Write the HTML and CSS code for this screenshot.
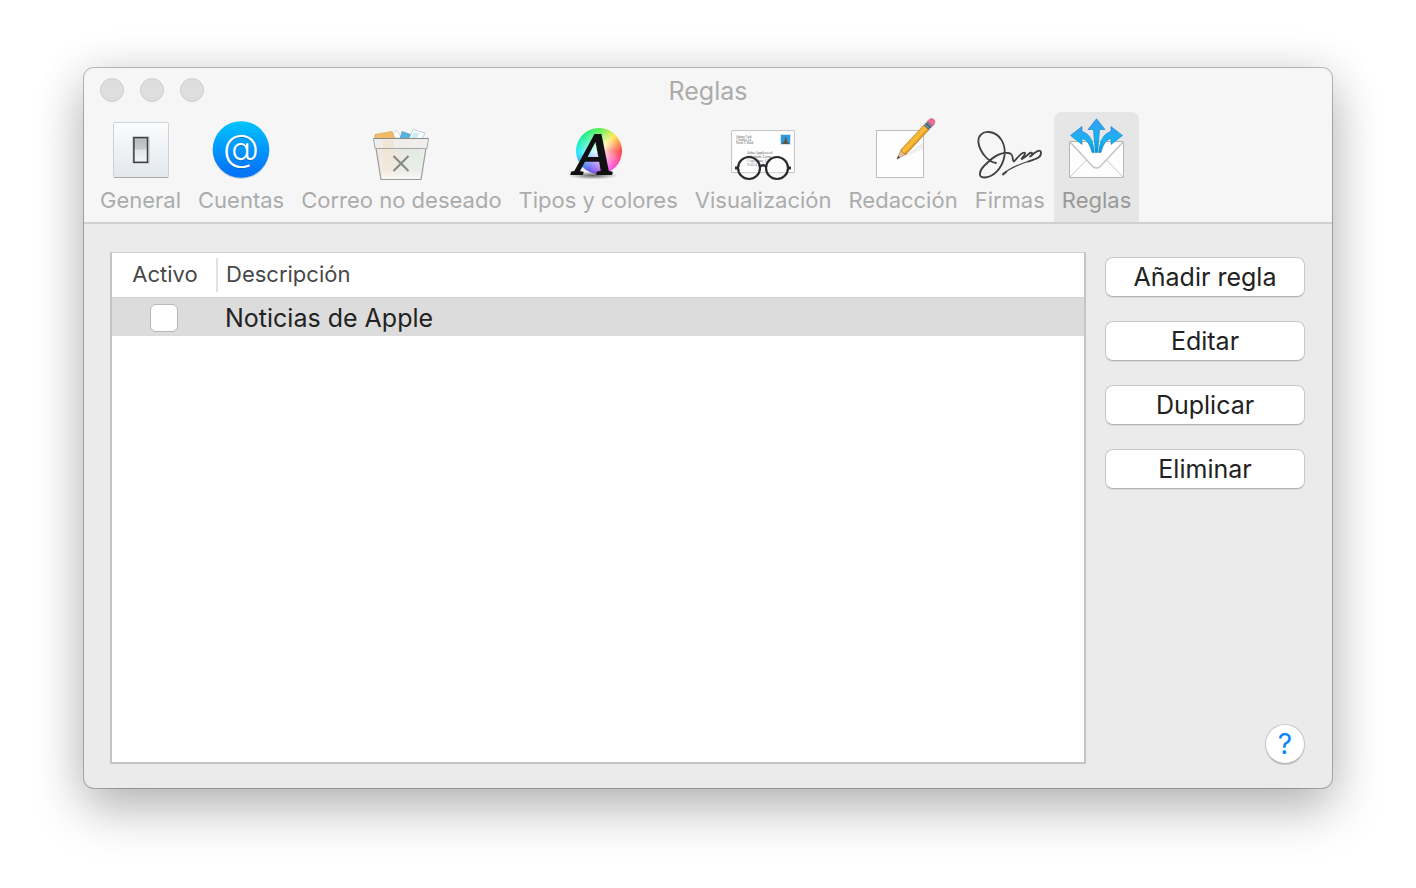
FILE: index.html
```html
<!DOCTYPE html>
<html lang="es">
<head>
<meta charset="utf-8">
<meta name="viewport" content="width=device-width, initial-scale=1">
<title>Reglas</title>
<link rel="stylesheet" href="styles.css">
</head>
<body>
<main class="window">
  <header class="chrome">
    <div class="titlebar">
      <div class="lights">
        <button class="light" type="button" aria-label="Cerrar"></button>
        <button class="light" type="button" aria-label="Minimizar"></button>
        <button class="light" type="button" aria-label="Ampliar"></button>
      </div>
      <h1 class="title">Reglas</h1>
    </div>
    <nav class="toolbar">
      <button class="tab" type="button">
        <svg class="icon" viewBox="0 0 64 64" aria-hidden="true">
          <defs>
            <linearGradient id="plate" x1="0" y1="0" x2="0" y2="1"><stop offset="0" stop-color="#fbfcfd"/><stop offset="1" stop-color="#e3e8ed"/></linearGradient>
            <linearGradient id="switch" x1="0" y1="0" x2="0" y2="1"><stop offset="0" stop-color="#d4d6d8"/><stop offset=".1" stop-color="#b9bcbe"/><stop offset=".45" stop-color="#c8cacc"/><stop offset=".5" stop-color="#e2e5e8"/><stop offset="1" stop-color="#f2f4f6"/></linearGradient>
          </defs>
          <rect x="4.500" y="4.500" width="55" height="55" rx="1" fill="url(#plate)" stroke="#cfd2d5"/>
          <path d="M5 59.500H59" stroke="#a9abad"/>
          <rect x="23" y="18" width="18" height="28" rx="1" fill="#d3d7da"/>
          <rect x="24.900" y="19.700" width="13.600" height="24.600" fill="url(#switch)" stroke="#3b4044" stroke-width="1.500"/>
        </svg>
        <span class="label">General</span>
      </button>
      <button class="tab" type="button">
        <svg class="icon" viewBox="0 0 64 64" aria-hidden="true">
          <defs><linearGradient id="blue" x1="0" y1="0" x2="0" y2="1"><stop offset="0" stop-color="#00c4fb"/><stop offset=".85" stop-color="#0478fb"/><stop offset="1" stop-color="#0374f5"/></linearGradient></defs>
          <circle cx="32" cy="32.600" r="28.400" fill="#9fb6cc" opacity=".6"/>
          <circle cx="32" cy="31.500" r="28.300" fill="url(#blue)"/>
          <text class="at-shade" x="32" y="44" text-anchor="middle">@</text>
          <text class="at" x="32" y="43" text-anchor="middle">@</text>
        </svg>
        <span class="label">Cuentas</span>
      </button>
      <button class="tab" type="button">
        <svg class="icon" viewBox="0 0 64 64" aria-hidden="true">
          <defs>
            <linearGradient id="bin" x1="0" y1="0" x2="1" y2="0"><stop offset="0" stop-color="#eceae6"/><stop offset=".25" stop-color="#efe3d2"/><stop offset=".55" stop-color="#e6e7e5"/><stop offset=".85" stop-color="#e3eae2"/><stop offset="1" stop-color="#eeeeee"/></linearGradient>
            <linearGradient id="shine" x1="0" y1="0" x2="0" y2="1"><stop offset="0" stop-color="#fff" stop-opacity="0"/><stop offset=".7" stop-color="#fff" stop-opacity=".2"/><stop offset="1" stop-color="#fff" stop-opacity=".75"/></linearGradient>
          </defs>
          <path d="M22 20 27 12 33 20Z" fill="#fff" stroke="#c5c7c8" stroke-width=".7"/>
          <path d="M6 16.500 23 13.500 26 21H6Z" fill="#f1bb68" stroke="#d9a24f" stroke-width=".7"/>
          <path d="M33 13.500 43 17 39 21H31Z" fill="#55b2dd" stroke="#3f97c4" stroke-width=".6"/>
          <path d="M44 11.500 56 15 53 21H40Z" fill="#fbfdfe" stroke="#a9bfc5" stroke-width=".7"/>
          <path d="M45 14 50 15.500 48 20H42Z" fill="#c8edf3"/>
          <path d="M7 30H57L52 61.500H12Z" fill="url(#bin)"/>
          <path d="M7 30H57L52 61.500H12Z" fill="url(#shine)" stroke="#999b9c" stroke-width="1.200"/>
          <path d="M4.500 20.500H59.500L58 30.500H6Z" fill="#eeedeb" fill-opacity=".94" stroke="#a8a9aa"/>
          <path d="M4.500 20.500H59.500" stroke="#868889"/>
          <path d="M14 22H24L25 30H14Z" fill="#efd9b5" opacity=".4"/>
          <path d="M24.500 38 39.500 53M39.500 38 24.500 53" stroke="#858782" stroke-width="2.100"/>
        </svg>
        <span class="label">Correo no deseado</span>
      </button>
      <button class="tab" type="button">
        <span class="icon fonts">
          <span class="wheel"></span>
          <svg class="fonts-letter" viewBox="0 0 64 64" aria-hidden="true">
            <defs><radialGradient id="soft"><stop offset="0" stop-opacity=".6"/><stop offset="1" stop-opacity="0"/></radialGradient></defs>
            <ellipse cx="27" cy="57.500" rx="25" ry="4" fill="url(#soft)"/>
            <text class="letter" x="27" y="56" text-anchor="middle">A</text>
          </svg>
        </span>
        <span class="label">Tipos y colores</span>
      </button>
      <button class="tab" type="button">
        <svg class="icon" viewBox="0 0 64 64" aria-hidden="true">
          <rect x=".600" y="12.600" width="62.800" height="42" rx=".5" fill="#fefefe" stroke="#c2c3c3"/>
          <g class="address">
            <text x="5" y="19.500">Johnny Cash</text><text x="5" y="22.500">1 Infinite Lp</text><text x="5" y="25.500">North T. Road</text>
          </g>
          <g class="recipient">
            <text x="16" y="36">John Appleseed</text><text x="16" y="40">1 Infinite Loop</text><text x="16" y="44">Cupertino, CA</text><text x="16" y="48">95014</text>
          </g>
          <rect x="49" y="16" width="11" height="11" fill="#cfe3f2"/>
          <rect x="50" y="17" width="9" height="9" fill="#2d9be0"/>
          <path d="M54 18.500Q56 20 56 23L58 26H51L54 22Z" fill="#65513d"/>
          <g fill="none" stroke="#282a2c" stroke-width="2.200">
            <circle cx="18" cy="50" r="11" fill="#fff" fill-opacity=".25"/>
            <circle cx="46" cy="50" r="11" fill="#fff" fill-opacity=".25"/>
            <path d="M28.500 49Q32 45.500 35.500 49" stroke-width="2.500"/>
            <path d="M4 50H7.500M56.500 50H60" stroke-width="2.800"/>
          </g>
        </svg>
        <span class="label">Visualización</span>
      </button>
      <button class="tab" type="button">
        <svg class="icon" viewBox="0 0 64 64" aria-hidden="true">
          <defs><linearGradient id="wood" x1="0" y1="0" x2="0" y2="1"><stop offset="0" stop-color="#f6ad25"/><stop offset=".5" stop-color="#ffc643"/><stop offset="1" stop-color="#dc8e14"/></linearGradient></defs>
          <rect x="5.500" y="12.500" width="47" height="47" fill="#fefefe" stroke="#bcbdbd"/>
          <path d="M29 41 52 24V31L34 39Z" fill="#000" opacity=".06"/>
          <g transform="translate(26 41) rotate(-47)">
            <path d="M0 0 10-3.400V3.400Z" fill="#e9bd91" stroke="#93704f" stroke-width=".5"/>
            <path d="M0 0 3-1.200V1.200Z" fill="#30302f"/>
            <path d="M10-3.400H43V3.400H10L8.500 1.700 9 0 8.500-1.700Z" fill="url(#wood)" stroke="#aa721c" stroke-width=".6"/>
            <path d="M10-1.100H43M10 1.300H43" stroke="#e7a12c" stroke-width=".5"/>
            <path d="M43-3.500H48.500V3.500H43Z" fill="#4a6270"/>
            <path d="M44.300-3.500V3.500M47-3.500V3.500" stroke="#a8bdc8" stroke-width=".8"/>
            <path d="M48.500-3.500H50.500Q54-3 54 0T50.500 3.500H48.500Z" fill="#ee6e97" stroke="#b84d70" stroke-width=".5"/>
          </g>
        </svg>
        <span class="label">Redacción</span>
      </button>
      <button class="tab" type="button">
        <svg class="icon" viewBox="0 0 64 64" aria-hidden="true">
          <g fill="none" stroke="#3f4041" stroke-width="1.800" stroke-linecap="round" stroke-linejoin="round">
            <path d="M18 45C10 44 2 34 .500 25C-.500 17 5 13.500 11 14C22 15 28 26 26.500 38C24 51 15 59.500 6 59.500C0 59.500 1 53 6 48C12 42 20 34 30 35C37 36 33 41 36 43.500C40 39 45 33 47 35C48 37 42 41 44 41C49 38 53 33 54 35C55 37 50 40 53 38C57 34 63 30 63 35C63 40 58 41 50 43.500"/>
            <path d="M50 43.500C39 47 31 51 25 56" stroke-width="1.200"/><path d="M28 54 25 56.500" stroke-width="1.900"/>
          </g>
        </svg>
        <span class="label">Firmas</span>
      </button>
      <button class="tab is-selected" type="button" aria-current="page">
        <svg class="icon" viewBox="0 0 64 64" aria-hidden="true">
          <defs><linearGradient id="arrow" x1="0" y1="0" x2="0" y2="1"><stop offset="0" stop-color="#3a9cf4"/><stop offset=".55" stop-color="#15b5f7"/><stop offset="1" stop-color="#0795df"/></linearGradient></defs>
          <rect x="4.500" y="23.500" width="54" height="36" rx=".5" fill="#fdfdfd" stroke="#b6b6b6"/>
          <path d="M5 59 21.500 42M58 59 41.500 42" stroke="#c8c8c8" fill="none"/>
          <path d="M5 24 25.500 46Q31.500 54 37.500 46L58 24" fill="#fff" stroke="#c4c4c4" stroke-width="1.400"/>
          <g fill="url(#arrow)" stroke="#0d83bd" stroke-width=".6" stroke-linejoin="round">
            <path d="M31.500 .800 40 11.500H34.500L32.700 34.500H30.300L28.500 11.500H23Z"/>
            <path d="M5.500 17.500 17 8.500V13.500C24.500 15.500 28.500 23 29.300 34.500H27C25 27 22.500 22 17 20.500V26.500Z"/>
            <path d="M57.500 17.500 46 8.500V13.500C38.500 15.500 34.500 23 33.700 34.500H36C38 27 40.500 22 46 20.500V26.500Z"/>
          </g>
        </svg>
        <span class="label">Reglas</span>
      </button>
    </nav>
  </header>
  <section class="content">
    <div class="list">
      <table class="rules">
        <thead><tr><th class="col-active" scope="col">Activo</th><th class="col-name" scope="col">Descripción</th></tr></thead>
        <tbody><tr><td class="cell-active"><input class="check" id="rule-1" type="checkbox"></td><td class="cell-name"><label for="rule-1">Noticias de Apple</label></td></tr></tbody>
      </table>
    </div>
    <div class="actions">
      <button class="push" type="button">Añadir regla</button>
      <button class="push" type="button">Editar</button>
      <button class="push" type="button">Duplicar</button>
      <button class="push" type="button">Eliminar</button>
      <button class="help" type="button" title="Ayuda">?</button>
    </div>
  </section>
</main>
</body>
</html>
```

FILE: styles.css
```css
* { box-sizing: border-box; }

body {
  margin: 0;
  min-height: 100vh;
  padding: 68px 84px 100px;
  display: flex;
  background: #fff;
  color: #222;
  font-family: Inter, "Liberation Sans", sans-serif;
}

button { margin: 0; padding: 0; border: 0; font: inherit; color: inherit; }

.window {
  flex: 1;
  min-width: 0;
  display: flex;
  flex-direction: column;
  border-radius: 10px;
  background: #ebebeb;
  box-shadow: 0 0 0 1px rgba(0, 0, 0, .24), 0 22px 52px rgba(0, 0, 0, .24), 0 4px 48px rgba(0, 0, 0, .12);
}

.chrome {
  border-bottom: 2px solid #d0d0d0;
  border-radius: 10px 10px 0 0;
  background: #f6f6f6;
}

.titlebar {
  display: grid;
  grid-template-columns: 1fr auto 1fr;
  align-items: center;
  height: 44px;
  padding: 0 16px;
}

.lights { display: flex; gap: 16px; }

.light {
  width: 24px;
  height: 24px;
  border: 1px solid #cecece;
  border-radius: 50%;
  background: #dedede;
}

.title {
  margin: 0;
  padding-top: 2px;
  font-size: 25px;
  line-height: 32px;
  font-weight: 400;
  color: #acacac;
}

.toolbar { display: flex; gap: 1px; padding: 0 8px; }

.tab {
  display: flex;
  flex-direction: column;
  align-items: center;
  gap: 4px;
  height: 110px;
  padding: 6px 8px 0;
  border-radius: 8px 8px 0 0;
  background: none;
  color: #acacac;
}

.tab.is-selected { background: #e6e6e6; color: #999; }

.icon { display: block; width: 64px; height: 64px; overflow: visible; }

.label { font-size: 22px; line-height: 28px; white-space: nowrap; }

.at, .at-shade { font: 300 37px Inter, sans-serif; fill: #fff; }
.at-shade { fill: #0560b8; opacity: .6; }

.fonts { display: grid; }
.wheel, .fonts-letter { grid-area: 1 / 1; }
.fonts-letter { width: 64px; height: 64px; overflow: visible; }
.letter { font: italic 400 60px "Liberation Serif", serif; fill: #111; stroke: #111; stroke-width: 2px; }

.wheel {
  width: 46px;
  height: 46px;
  margin: 10px 0 0 10px;
  border-radius: 50%;
  background:
    radial-gradient(circle, #fff 0, rgba(255, 255, 255, .5) 35%, rgba(255, 255, 255, 0) 70%),
    conic-gradient(#4cf04c, #ffe94a 45deg, #ff4040 90deg, #ff50e8 145deg, #5858f0 210deg, #20e8ff 265deg, #10f090 310deg, #4cf04c);
}

.address, .recipient { font-family: "Liberation Serif", serif; fill: #555; }
.address { font-size: 3px; }
.recipient { font-size: 4px; }

.content {
  flex: 1;
  display: grid;
  grid-template-columns: 1fr 200px;
  gap: 19px;
  padding: 28px 27px 24px 26px;
}

.list {
  border: 2px solid #c4c4c4;
  border-top: 1px solid #d0d0d0;
  background: #fff;
}

.rules { width: 100%; border-collapse: collapse; }
.rules th { height: 44px; padding: 0 0 2px; font-size: 22px; line-height: 28px; font-weight: 400; color: #484848; }
.rules td { height: 39px; padding: 3px 0 0; background: #dcdcdc; font-size: 25px; line-height: 32px; }
.rules .col-active {
  width: 106px;
  background: linear-gradient(#e2e2e2, #e2e2e2) right 5px / 2px 34px no-repeat;
}
.rules .col-name { padding-left: 8px; text-align: left; }
.rules .cell-active { padding-right: 2px; }
.rules .cell-name { padding-left: 7px; color: #222; }
.rules tbody tr { border-top: 1px solid #d2d2d2; }

.check {
  appearance: none;
  display: block;
  width: 28px;
  height: 28px;
  margin: 0 auto;
  border: 1px solid #b8b8b8;
  border-radius: 6px;
  background: #fff;
}

.actions { display: flex; flex-direction: column; gap: 24px; padding-top: 5px; }

.push {
  height: 40px;
  border: 1px solid #c9c9c9;
  border-bottom-color: #b4b4b4;
  border-radius: 8px;
  background: #fff;
  box-shadow: 0 1px 1px rgba(0, 0, 0, .08);
  font-size: 25px;
  line-height: 32px;
}

.help {
  width: 40px;
  height: 40px;
  margin-top: auto;
  align-self: flex-end;
  border: 1px solid #c9c9c9;
  border-bottom-color: #b4b4b4;
  border-radius: 50%;
  background: #fff;
  box-shadow: 0 1px 1px rgba(0, 0, 0, .15);
  font-size: 28px;
  line-height: 36px;
  color: #0a84ff;
}
```
